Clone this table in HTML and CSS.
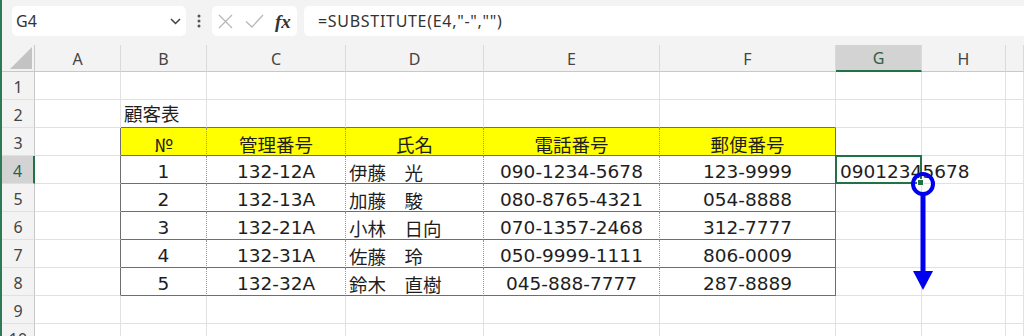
FILE: index.html
```html
<!DOCTYPE html>
<html lang="ja">
<head>
<meta charset="utf-8">
<title>顧客表</title>
<link rel="stylesheet" href="styles.css">
</head>
<body>
<div class="app">
  <div class="bar">
    <div class="namebox">
      <span class="name">G4</span>
      <svg class="chev" width="11" height="7" viewBox="0 0 11 7"><path d="M1 1 L5.5 5.5 L10 1" fill="none" stroke="#404040" stroke-width="1.5"/></svg>
    </div>
    <div class="dots">
      <svg width="4" height="14" viewBox="0 0 4 14"><circle cx="2" cy="2" r="1.5" fill="#555"/><circle cx="2" cy="7" r="1.5" fill="#555"/><circle cx="2" cy="12" r="1.5" fill="#555"/></svg>
    </div>
    <div class="fxbox">
      <svg class="ico-x" width="15" height="15" viewBox="0 0 15 15"><path d="M1 1 L14 14 M14 1 L1 14" stroke="#b8b8b8" stroke-width="1.3" fill="none"/></svg>
      <svg class="ico-ok" width="19" height="14" viewBox="0 0 19 14"><path d="M1 7.5 L7 13 L18 1" stroke="#b8b8b8" stroke-width="1.3" fill="none"/></svg>
      <span class="fx">fx</span>
    </div>
    <div class="formula">=SUBSTITUTE(E4,"-","")</div>
  </div>

  <div class="sheet">
    <!-- column headers -->
    <div class="corner"><svg width="22" height="22" viewBox="0 0 22 22"><polygon points="22,0 22,22 0,22" fill="#c3c3c3"/></svg></div>
    <div class="ch">A</div><div class="ch">B</div><div class="ch">C</div><div class="ch">D</div><div class="ch">E</div><div class="ch">F</div><div class="ch sel-col">G</div><div class="ch">H</div><div class="ch last"></div>

    <!-- row 1 -->
    <div class="rh">1</div><div class="c"></div><div class="c"></div><div class="c"></div><div class="c"></div><div class="c"></div><div class="c"></div><div class="c"></div><div class="c"></div><div class="c"></div>

    <!-- row 2 -->
    <div class="rh">2</div><div class="c"></div><div class="c top title">顧客表</div><div class="c top"></div><div class="c top"></div><div class="c top"></div><div class="c top"></div><div class="c"></div><div class="c"></div><div class="c"></div>

    <!-- row 3 -->
    <div class="rh">3</div><div class="c edge"></div>
    <div class="c t hd ctr no">№</div><div class="c t hd ctr">管理番号</div><div class="c t hd ctr">氏名</div><div class="c t hd ctr">電話番号</div><div class="c t tf hd ctr">郵便番号</div>
    <div class="c"></div><div class="c"></div><div class="c"></div>

    <!-- row 4 -->
    <div class="rh sel-row">4</div><div class="c edge"></div>
    <div class="c t ctr">1</div><div class="c t ctr">132-12A</div><div class="c t lft">伊藤　光</div><div class="c t ctr">090-1234-5678</div><div class="c t tf ctr">123-9999</div>
    <div class="c active lft">09012345678<span class="selbox"><span class="handle"></span></span></div><div class="c"></div><div class="c"></div>

    <!-- row 5 -->
    <div class="rh">5</div><div class="c edge"></div>
    <div class="c t ctr">2</div><div class="c t ctr">132-13A</div><div class="c t lft">加藤　駿</div><div class="c t ctr">080-8765-4321</div><div class="c t tf ctr">054-8888</div>
    <div class="c"></div><div class="c"></div><div class="c"></div>

    <!-- row 6 -->
    <div class="rh">6</div><div class="c edge"></div>
    <div class="c t ctr">3</div><div class="c t ctr">132-21A</div><div class="c t lft">小林　日向</div><div class="c t ctr">070-1357-2468</div><div class="c t tf ctr">312-7777</div>
    <div class="c"></div><div class="c"></div><div class="c"></div>

    <!-- row 7 -->
    <div class="rh">7</div><div class="c edge"></div>
    <div class="c t ctr">4</div><div class="c t ctr">132-31A</div><div class="c t lft">佐藤　玲</div><div class="c t ctr">050-9999-1111</div><div class="c t tf ctr">806-0009</div>
    <div class="c"></div><div class="c"></div><div class="c"></div>

    <!-- row 8 -->
    <div class="rh">8</div><div class="c edge"></div>
    <div class="c t ctr">5</div><div class="c t ctr">132-32A</div><div class="c t lft">鈴木　直樹</div><div class="c t ctr">045-888-7777</div><div class="c t tf ctr">287-8889</div>
    <div class="c"></div><div class="c"></div><div class="c"></div>

    <!-- row 9 -->
    <div class="rh">9</div><div class="c"></div><div class="c"></div><div class="c"></div><div class="c"></div><div class="c"></div><div class="c"></div><div class="c"></div><div class="c"></div><div class="c"></div>

    <!-- row 10 -->
    <div class="rh">10</div><div class="c"></div><div class="c"></div><div class="c"></div><div class="c"></div><div class="c"></div><div class="c"></div><div class="c"></div><div class="c"></div><div class="c"></div>
  </div>

  <svg class="arrow" width="40" height="125" viewBox="0 0 40 125">
    <circle cx="18" cy="16" r="10" fill="none" stroke="#0000ee" stroke-width="4"/>
    <rect x="15.5" y="27" width="5" height="78" fill="#0000ee"/>
    <polygon points="8,103 28,103 18,122" fill="#0000ee"/>
  </svg>
</div>
</body>
</html>
```

FILE: styles.css
```css
html, body {
  margin: 0;
  padding: 0;
  background: #ffffff;
}

body {
  width: 1024px;
  height: 336px;
  overflow: hidden;
  font-family: "Noto Sans", "Liberation Sans", sans-serif;
  color: #222;
}

.app {
  position: relative;
  height: 336px;
  border-left: 2px solid #2d7a55;
  overflow: hidden;
}

/* ---------- formula bar ---------- */
.bar {
  height: 45px;
  background: #f3f3f3;
  display: flex;
  align-items: flex-start;
  padding: 6px 0 0 10px;
  box-sizing: border-box;
}

.namebox {
  width: 174px;
  height: 30px;
  background: #fff;
  border-radius: 5px;
  display: flex;
  align-items: center;
  justify-content: space-between;
  padding: 0 5px 0 4px;
  box-sizing: border-box;
}

.name {
  font-size: 16px;
  color: #333;
}

.dots {
  width: 26px;
  height: 30px;
  display: flex;
  align-items: center;
  justify-content: center;
}

.fxbox {
  width: 85px;
  height: 30px;
  background: #fff;
  border-radius: 5px;
  display: flex;
  align-items: center;
  padding-left: 6px;
  box-sizing: border-box;
  gap: 0;
}

.ico-x { margin-right: 12px; }
.ico-ok { margin-right: 11px; }

.fx {
  font-family: "Liberation Serif", "DejaVu Serif", serif;
  font-style: italic;
  font-weight: bold;
  font-size: 19px;
  color: #333;
  line-height: 1;
}

.formula {
  flex: 1;
  height: 30px;
  margin-left: 7px;
  background: #fff;
  border-radius: 5px 0 0 5px;
  display: flex;
  align-items: center;
  padding-left: 14px;
  font-size: 16px;
  letter-spacing: 0.7px;
  color: #333;
}

/* ---------- sheet ---------- */
.sheet {
  display: grid;
  grid-template-columns: 33px 86px 86px 139px 138px 176px 176px 86px 84px 1fr;
  grid-template-rows: 27px repeat(10, 28px);
}

.sheet > div {
  box-sizing: border-box;
  display: flex;
  align-items: center;
  white-space: nowrap;
}

.corner {
  background: #f3f3f3;
  border-right: 1px solid #c8c8c8;
  border-bottom: 1px solid #c8c8c8;
  justify-content: flex-end;
  align-items: flex-end !important;
  padding: 0 2px 2px 0;
}

.ch {
  background: #f3f3f3;
  border-right: 1px solid #dadada;
  border-bottom: 1px solid #c8c8c8;
  justify-content: center;
  font-size: 16px;
  color: #444;
  padding-top: 1px;
}

.ch.sel-col {
  background: #d3d3d3;
  border-bottom: 2px solid #217346;
  color: #2f5e45;
}

.rh {
  background: #f3f3f3;
  border-right: 1px solid #c8c8c8;
  border-bottom: 1px solid #e0e0e0;
  justify-content: center;
  font-size: 16px;
  color: #444;
  padding-top: 2px;
}

.rh.sel-row {
  background: #d3d3d3;
  border-right: 2px solid #217346;
  color: #2f5e45;
}

.c {
  border-right: 1px solid #e1e1e1;
  border-bottom: 1px solid #e1e1e1;
  font-family: "DejaVu Sans", "Noto Sans CJK JP", sans-serif;
  font-size: 18.5px;
  color: #1e1e1e;
  padding-top: 4px;
}

.c.top { border-bottom-color: #6e6e6e; }
.c.edge { border-right-color: #6e6e6e; }

.c.t {
  border-bottom: 1px solid #6e6e6e;
  border-right: 1px dotted #959595;
}

.c.t.tf { border-right: 1px solid #6e6e6e; }

.hd { background: #ffff00; }

.ctr { justify-content: center; }
.lft { padding-left: 3px; }

.title {
  padding-left: 3px;
  padding-top: 0;
  align-items: flex-end !important;
  padding-bottom: 1px;
}

.no {
  font-family: "Noto Sans CJK JP", sans-serif;
}

.active {
  position: relative;
  overflow: visible;
  padding-left: 4px;
}

.selbox {
  position: absolute;
  left: -1px;
  top: -1px;
  right: -1px;
  bottom: -1px;
  border: 2px solid #217346;
}

.handle {
  position: absolute;
  right: -4px;
  bottom: -4px;
  width: 5px;
  height: 5px;
  background: #217346;
  border: 1px solid #fff;
}

/* ---------- annotation ---------- */
.arrow {
  position: absolute;
  left: 903px;
  top: 168px;
}
```
